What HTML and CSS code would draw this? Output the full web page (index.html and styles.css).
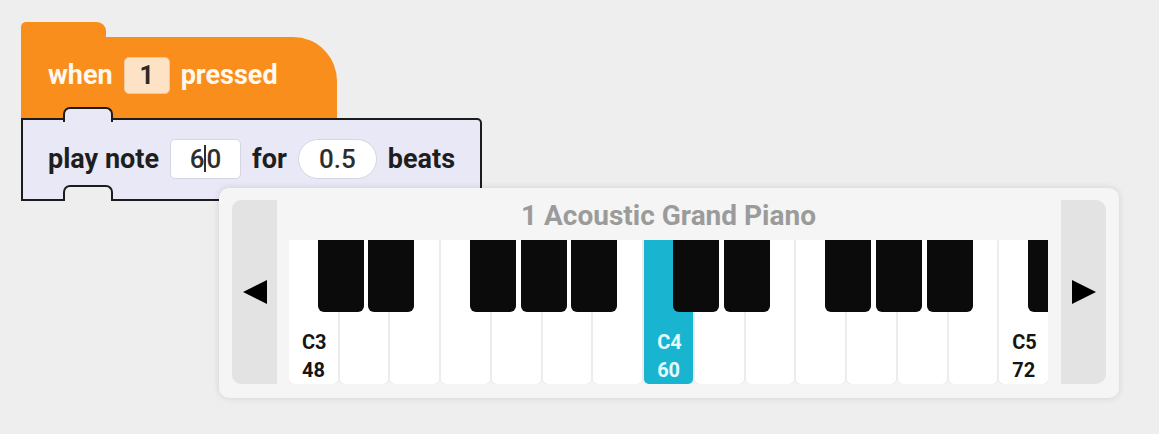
FILE: index.html
```html
<!DOCTYPE html>
<html>
<head>
<meta charset="utf-8">
<link rel="stylesheet" href="styles.css">
</head>
<body>
<div class="workspace">
  <div class="hat">
    <div class="hat-tab"></div>
    <div class="hat-body">
      <span class="label light">when</span>
      <span class="key-input">1</span>
      <span class="label light">pressed</span>
    </div>
  </div>
  <div class="stack">
    <span class="label">play note</span>
    <span class="num-input">6<span class="caret"></span>0</span>
    <span class="label">for</span>
    <span class="pill-input">0.5</span>
    <span class="label">beats</span>
  </div>
</div>

<div class="piano-popup">
  <div class="piano-inner">
    <div class="nav nav-left">
      <svg width="24" height="24" viewBox="0 0 24 24"><polygon points="24,0 24,24 0,12" fill="#000"/></svg>
    </div>
    <div class="piano-main">
      <div class="piano-title">1 Acoustic Grand Piano</div>
      <div class="keyboard">
        <div class="white has-black"><span class="black"></span><span class="note">C3</span><span class="note">48</span></div>
        <div class="white has-black"><span class="black"></span></div>
        <div class="white"></div>
        <div class="white has-black"><span class="black"></span></div>
        <div class="white has-black"><span class="black"></span></div>
        <div class="white has-black"><span class="black"></span></div>
        <div class="white"></div>
        <div class="white active has-black"><span class="black"></span><span class="note">C4</span><span class="note">60</span></div>
        <div class="white has-black"><span class="black"></span></div>
        <div class="white"></div>
        <div class="white has-black"><span class="black"></span></div>
        <div class="white has-black"><span class="black"></span></div>
        <div class="white has-black"><span class="black"></span></div>
        <div class="white"></div>
        <div class="white has-black"><span class="black"></span><span class="note">C5</span><span class="note">72</span></div>
      </div>
    </div>
    <div class="nav nav-right">
      <svg width="24" height="24" viewBox="0 0 24 24"><polygon points="0,0 0,24 24,12" fill="#000"/></svg>
    </div>
  </div>
</div>
</body>
</html>
```

FILE: styles.css
```css
* { box-sizing: border-box; }

html, body {
  margin: 0;
  padding: 0;
}

body {
  width: 1159px;
  height: 434px;
  background: #eeeeee;
  font-family: "Roboto", "Liberation Sans", sans-serif;
  position: relative;
  overflow: hidden;
}

.workspace {
  padding: 22px 0 0 21px;
  display: flex;
  flex-direction: column;
  align-items: flex-start;
}

/* hat block */
.hat {
  display: flex;
  flex-direction: column;
}

.hat-tab {
  width: 85px;
  height: 15px;
  background: #f98e1d;
  border-radius: 5px 9px 0 0;
}

.hat-body {
  width: 316px;
  height: 81px;
  background: #f98e1d;
  border-radius: 0 44px 0 0;
  display: flex;
  align-items: center;
  padding: 0 0 5px 27px;
  gap: 11px;
}

.label {
  font-size: 27px;
  font-weight: 700;
  color: #1e1e1e;
}

.label.light {
  color: #fff8ee;
}

.key-input {
  width: 46px;
  height: 37px;
  background: #fde2c6;
  border: 1px solid #efc9a1;
  border-radius: 5px;
  display: flex;
  align-items: center;
  justify-content: center;
  font-size: 25px;
  font-weight: 700;
  color: #2a2a2a;
}

/* stack block */
.stack {
  position: relative;
  width: 461px;
  height: 83px;
  background: #e8e8f7;
  border: 2px solid #1c1c1c;
  border-radius: 0 5px 0 0;
  display: flex;
  align-items: center;
  padding: 0 0 2px 25px;
  gap: 11px;
}

.stack::before {
  content: "";
  position: absolute;
  left: 40px;
  top: -13px;
  width: 46px;
  height: 13px;
  background: #e8e8f7;
  border: 2px solid #1c1c1c;
  border-bottom: none;
  border-radius: 7px 7px 0 0;
}

.stack::after {
  content: "";
  position: absolute;
  left: 40px;
  bottom: -2px;
  width: 46px;
  height: 14px;
  background: #eeeeee;
  border: 2px solid #1c1c1c;
  border-bottom: none;
  border-radius: 7px 7px 0 0;
}

.num-input {
  width: 71px;
  height: 40px;
  background: #ffffff;
  border: 1px solid #d6d6e2;
  border-radius: 5px;
  display: flex;
  align-items: center;
  justify-content: center;
  font-size: 26px;
  font-weight: 500;
  color: #2e2e2e;
}

.caret {
  display: inline-block;
  width: 2px;
  height: 27px;
  background: #2e2e2e;
}

.pill-input {
  width: 79px;
  height: 40px;
  background: #ffffff;
  border: 1px solid #d6d6e2;
  border-radius: 20px;
  display: flex;
  align-items: center;
  justify-content: center;
  font-size: 26px;
  font-weight: 500;
  color: #2e2e2e;
}

/* piano popup */
.piano-popup {
  position: absolute;
  left: 219px;
  top: 188px;
  width: 900px;
  height: 210px;
  background: #f5f5f5;
  border-radius: 10px;
  box-shadow: 0 0 7px rgba(0, 0, 0, 0.12);
  padding: 12px 13px 14px 13px;
}

.piano-inner {
  display: flex;
  height: 100%;
}

.nav {
  width: 45px;
  background: #e3e3e3;
  display: flex;
  align-items: center;
  justify-content: center;
}

.nav-left {
  border-radius: 9px 0 0 9px;
}

.nav-right {
  border-radius: 0 10px 10px 0;
}

.piano-main {
  flex: 1;
  display: flex;
  flex-direction: column;
  padding: 0 13px 0 12px;
}

.piano-title {
  height: 32px;
  line-height: 32px;
  margin-bottom: 8px;
  text-align: center;
  font-size: 28px;
  font-weight: 700;
  color: #9b9b9b;
}

.keyboard {
  height: 144px;
  display: flex;
  gap: 2px;
  overflow: hidden;
}

.white {
  position: relative;
  flex: 1 1 0;
  background: #ffffff;
  border-radius: 0 0 5px 5px;
  box-shadow: 0 0 2px rgba(0, 0, 0, 0.12);
  display: flex;
  flex-direction: column;
  justify-content: flex-end;
  padding: 0 0 0 13px;
}

.white.active {
  background: #19b4cf;
}

.black {
  position: absolute;
  z-index: 1;
  top: 0;
  right: -26px;
  width: 46px;
  height: 72px;
  background: #0b0b0b;
  border-radius: 0 0 6px 6px;
}

.note {
  font-size: 20px;
  font-weight: 700;
  line-height: 28px;
  color: #151515;
}

.white.active .note {
  color: #e6fbff;
}
```
